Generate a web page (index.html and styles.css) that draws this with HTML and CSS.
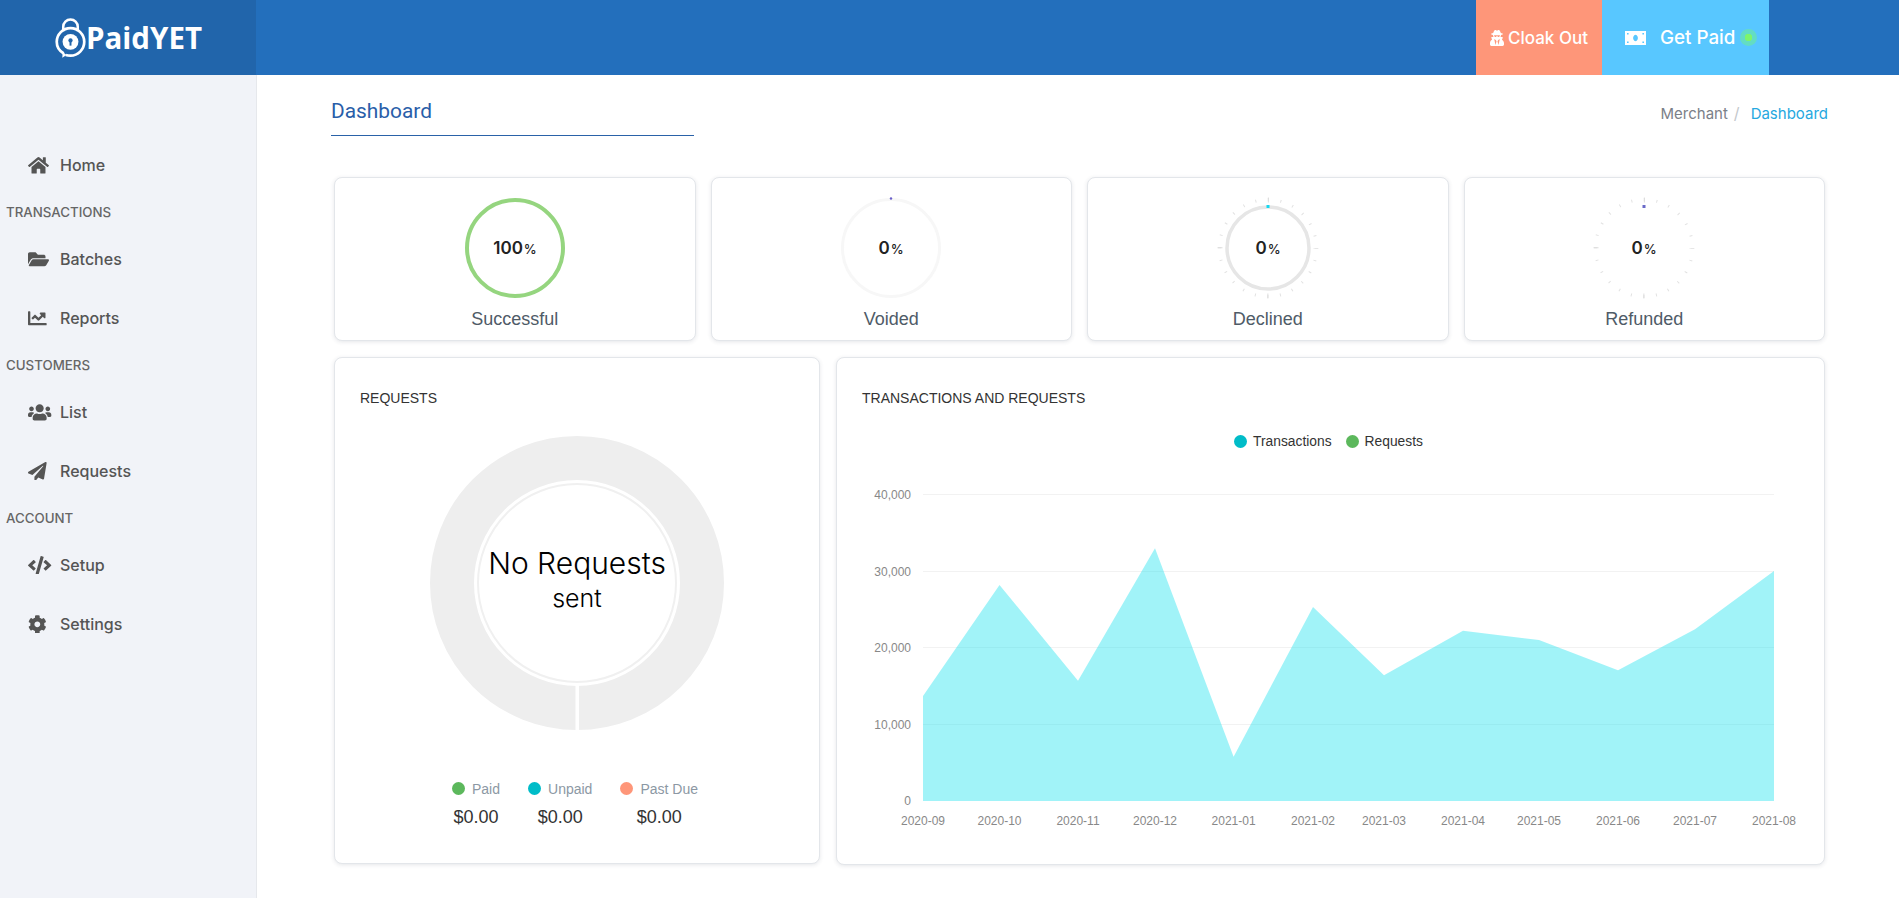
FILE: index.html
```html
<!DOCTYPE html>
<html lang="en">
<head>
<meta charset="utf-8">
<title>PaidYET Dashboard</title>
<link rel="stylesheet" href="styles.css">
</head>
<body>
<svg class="sprites" width="0" height="0" aria-hidden="true">
  <symbol id="i-home" viewBox="0 0 576 512" preserveAspectRatio="xMinYMid meet"><path d="M280.37 148.26L96 300.11V464a16 16 0 0 0 16 16l112.06-.29a16 16 0 0 0 15.92-16V368a16 16 0 0 1 16-16h64a16 16 0 0 1 16 16v95.64a16 16 0 0 0 16 16.05L464 480a16 16 0 0 0 16-16V300L295.67 148.26a12.19 12.19 0 0 0-15.3 0zM571.6 251.47L488 182.56V44.05a12 12 0 0 0-12-12h-56a12 12 0 0 0-12 12v72.61L318.47 43a48 48 0 0 0-61 0L4.34 251.47a12 12 0 0 0-1.6 16.9l25.5 31A12 12 0 0 0 45.15 301l235.22-193.74a12.19 12.19 0 0 1 15.3 0L530.9 301a12 12 0 0 0 16.9-1.6l25.5-31a12 12 0 0 0-1.7-16.93z"/></symbol>
  <symbol id="i-folder" viewBox="0 0 576 512" preserveAspectRatio="xMinYMid meet"><path d="M572.694 292.093L500.27 416.248A63.997 63.997 0 0 1 444.989 448H45.025c-18.523 0-30.064-20.093-20.731-36.093l72.424-124.155A64 64 0 0 1 152 256h399.964c18.523 0 30.064 20.093 20.73 36.093zM152 224h328v-48c0-26.51-21.49-48-48-48H272l-64-64H48C21.49 64 0 85.49 0 112v278.046l69.077-118.418C86.214 242.25 117.989 224 152 224z"/></symbol>
  <symbol id="i-chart" viewBox="0 0 512 512" preserveAspectRatio="xMinYMid meet"><path d="M496 384H64V80c0-8.84-7.16-16-16-16H16C7.16 64 0 71.16 0 80v336c0 17.67 14.33 32 32 32h464c8.84 0 16-7.16 16-16v-32c0-8.84-7.16-16-16-16zM464 96H345.94c-21.38 0-32.09 25.85-16.97 40.97l32.4 32.4L288 242.75l-73.37-73.37c-12.5-12.5-32.76-12.5-45.25 0l-68.69 68.69c-6.25 6.25-6.25 16.38 0 22.63l22.62 22.62c6.25 6.25 16.38 6.25 22.63 0L192 237.25l73.37 73.37c12.5 12.5 32.76 12.5 45.25 0l96-96 32.4 32.4c15.12 15.12 40.97 4.41 40.97-16.97V112c.01-8.84-7.15-16-15.99-16z"/></symbol>
  <symbol id="i-users" viewBox="0 0 640 512" preserveAspectRatio="xMinYMid meet"><path d="M96 224c35.3 0 64-28.7 64-64s-28.7-64-64-64-64 28.7-64 64 28.7 64 64 64zm448 0c35.3 0 64-28.7 64-64s-28.7-64-64-64-64 28.7-64 64 28.7 64 64 64zm32 32h-64c-17.6 0-33.5 7.1-45.1 18.6 40.3 22.1 68.9 62 75.1 109.4h66c17.7 0 32-14.3 32-32v-32c0-35.3-28.7-64-64-64zm-256 0c61.9 0 112-50.1 112-112S381.9 32 320 32 208 82.1 208 144s50.1 112 112 112zm76.8 32h-8.3c-20.8 10-43.9 16-68.5 16s-47.6-6-68.5-16h-8.3C179.6 288 128 339.6 128 403.2V432c0 26.5 21.5 48 48 48h288c26.5 0 48-21.5 48-48v-28.8c0-63.6-51.6-115.2-115.2-115.2zm-223.7-13.4C161.5 263.1 145.6 256 128 256H64c-35.3 0-64 28.7-64 64v32c0 17.7 14.3 32 32 32h65.9c6.3-47.4 34.9-87.3 75.2-109.4z"/></symbol>
  <symbol id="i-plane" viewBox="0 0 512 512" preserveAspectRatio="xMinYMid meet"><path d="M476 3.2L12.5 270.6c-18.1 10.4-15.8 35.6 2.2 43.2L121 358.4l287.3-253.2c5.5-4.9 13.3 2.6 8.6 8.3L176 407v80.5c0 23.6 28.5 32.9 42.5 15.8L282 426l124.6 52.2c14.2 6 30.4-2.9 33-18.2l72-432C515 7.8 493.3-6.8 476 3.2z"/></symbol>
  <symbol id="i-code" viewBox="0 0 640 512" preserveAspectRatio="xMinYMid meet"><path d="M278.9 511.5l-61-17.7c-6.4-1.8-10-8.5-8.2-14.9L346.2 8.7c1.8-6.4 8.5-10 14.9-8.2l61 17.7c6.4 1.8 10 8.5 8.2 14.9L293.8 503.3c-1.9 6.4-8.5 10.1-14.9 8.2zm-114-112.2l43.5-46.4c4.6-4.9 4.3-12.7-.8-17.2L117 256l90.6-79.7c5.1-4.5 5.5-12.3.8-17.2l-43.5-46.4c-4.5-4.8-12.1-5.1-17-.5L3.8 247.2c-5.1 4.7-5.1 12.8 0 17.5l144.1 135.1c4.9 4.6 12.5 4.4 17-.5zm327.2.6l144.1-135.1c5.1-4.7 5.1-12.8 0-17.5L492.1 112.1c-4.8-4.5-12.4-4.3-17 .5L431.6 159c-4.6 4.9-4.3 12.7.8 17.2L523 256l-90.6 79.7c-5.1 4.5-5.5 12.3-.8 17.2l43.5 46.4c4.5 4.9 12.1 5.1 17 .6z"/></symbol>
  <symbol id="i-cog" viewBox="0 0 512 512" preserveAspectRatio="xMinYMid meet"><path d="M487.4 315.7l-42.6-24.6c4.3-23.2 4.3-47 0-70.2l42.6-24.6c4.9-2.8 7.1-8.6 5.5-14-11.1-35.6-30-67.8-54.7-94.6-3.8-4.1-10-5.1-14.8-2.3L380.8 110c-17.9-15.4-38.5-27.3-60.8-35.1V25.8c0-5.6-3.9-10.5-9.4-11.7-36.7-8.2-74.3-7.8-109.2 0-5.5 1.2-9.4 6.1-9.4 11.7V75c-22.2 7.9-42.8 19.8-60.8 35.1L88.7 85.5c-4.9-2.8-11-1.9-14.8 2.3-24.7 26.7-43.6 58.9-54.7 94.6-1.7 5.4.6 11.2 5.5 14L67.3 221c-4.3 23.2-4.3 47 0 70.2l-42.6 24.6c-4.9 2.8-7.1 8.6-5.5 14 11.1 35.6 30 67.8 54.7 94.6 3.8 4.1 10 5.1 14.8 2.3l42.6-24.6c17.9 15.4 38.5 27.3 60.8 35.1v49.2c0 5.6 3.9 10.5 9.4 11.7 36.7 8.2 74.3 7.8 109.2 0 5.5-1.2 9.4-6.1 9.4-11.7v-49.2c22.2-7.9 42.8-19.8 60.8-35.1l42.6 24.6c4.9 2.8 11 1.9 14.8-2.3 24.7-26.7 43.6-58.9 54.7-94.6 1.5-5.5-.7-11.3-5.6-14.1zM256 336c-44.1 0-80-35.9-80-80s35.9-80 80-80 80 35.9 80 80-35.9 80-80 80z"/></symbol>
  <symbol id="i-secret" viewBox="0 0 448 512"><path d="M383.9 308.3l23.9-62.6c4-10.5-3.7-21.7-15-21.7h-58.5c11-18.9 17.8-40.6 17.8-64v-.3c39.2-7.8 64-19.1 64-31.7 0-13.3-27.3-25.1-70.1-33-9.2-32.8-27-65.8-40.6-82.8-9.5-11.9-25.9-15.6-39.5-8.8l-27.6 13.8c-9 4.5-19.6 4.5-28.6 0L182.1 3.4c-13.6-6.8-30-3.1-39.5 8.8-13.5 17-31.4 50-40.6 82.8-42.7 7.9-70 19.7-70 33 0 12.6 24.8 23.9 64 31.7v.3c0 23.4 6.8 45.1 17.8 64H56.3c-11.5 0-19.2 11.7-14.7 22.3l25.8 60.2C27.3 329.8 0 372.7 0 422.4v44.8C0 491.9 20.1 512 44.8 512h358.4c24.7 0 44.8-20.1 44.8-44.8v-44.8c0-48.4-25.8-90.4-64.1-114.1zM176 480l-41.6-192 49.6 32 24 40-32 120zm96 0l-32-120 24-40 49.6-32L272 480zm41.7-298.5c-3.9 11.9-7 24.6-16.5 33.4-10.1 9.3-48 22.4-64-25-2.8-8.4-15.4-8.4-18.3 0-17 50.2-56 32.4-64 25-9.5-8.8-12.7-21.5-16.5-33.4-.8-2.5-6.3-5.7-6.3-5.8v-10.8c28.3 3.6 61 5.8 96 5.8s67.7-2.1 96-5.8v10.8c-.1.1-5.6 3.2-6.4 5.8z"/></symbol>
</svg>

<header class="topbar">
  <a class="brand" href="#">
    <svg class="brand-mark" viewBox="0 0 32 42" aria-hidden="true">
      <path class="mark-shackle" d="M8.5 14.5V10a7.5 7.5 0 0 1 15 0v4.5"/>
      <path class="mark-ring" d="M9 37.5C4.5 35 1.8 30 1.8 25.5a14.2 14.2 0 1 1 14.2 14.2c-1.5 0-3.5-.2-4.8-.7"/>
      <path class="mark-tail" d="M8 36l4 3-4.5 2.8z"/>
      <circle class="mark-disc" cx="16" cy="25.5" r="8.2"/>
      <circle class="mark-hole" cx="16" cy="24" r="2.2"/>
      <rect class="mark-hole" x="15" y="24" width="2" height="5.4"/>
    </svg>
    <span class="brand-name">PaidYET</span>
  </a>
  <div class="topbar-actions">
    <a class="action action-cloak" href="#">
      <svg class="action-icon-secret"><use href="#i-secret"/></svg>
      <span>Cloak Out</span>
    </a>
    <a class="action action-paid" href="#">
      <svg class="action-icon-bill" viewBox="0 0 21 14" aria-hidden="true">
        <path class="bill" fill-rule="evenodd" d="M0 0h21v14H0zM10.500 3.800a2.400 3.200 0 1 0 .01 0zM2 2v1.600h1.600V2zM17.400 2v1.600H19V2zM2 10.400V12h1.600v-1.600zM17.400 10.400V12H19v-1.600z"/>
      </svg>
      <span>Get Paid</span>
      <span class="pulse"></span>
    </a>
  </div>
</header>

<div class="layout">
  <nav class="sidebar">
    <a class="nav-item" href="#"><svg class="nav-icon"><use href="#i-home"/></svg><span>Home</span></a>
    <div class="nav-section">TRANSACTIONS</div>
    <a class="nav-item" href="#"><svg class="nav-icon"><use href="#i-folder"/></svg><span>Batches</span></a>
    <a class="nav-item" href="#"><svg class="nav-icon"><use href="#i-chart"/></svg><span>Reports</span></a>
    <div class="nav-section">CUSTOMERS</div>
    <a class="nav-item" href="#"><svg class="nav-icon"><use href="#i-users"/></svg><span>List</span></a>
    <a class="nav-item" href="#"><svg class="nav-icon"><use href="#i-plane"/></svg><span>Requests</span></a>
    <div class="nav-section">ACCOUNT</div>
    <a class="nav-item" href="#"><svg class="nav-icon"><use href="#i-code"/></svg><span>Setup</span></a>
    <a class="nav-item" href="#"><svg class="nav-icon"><use href="#i-cog"/></svg><span>Settings</span></a>
  </nav>

  <main class="content">
    <div class="page-head">
      <h1 class="page-title">Dashboard</h1>
      <div class="crumbs"><span>Merchant</span><span class="crumb-sep">/</span><span class="crumb-current">Dashboard</span></div>
    </div>

    <section class="stat-grid">
      <div class="card stat">
        <svg class="gauge" viewBox="-60 -60 120 120">
          <circle class="ring-green" r="48"/>
          <text class="gauge-text" y="6">100<tspan class="gauge-pct" dx="1">%</tspan></text>
        </svg>
        <div class="stat-label">Successful</div>
      </div>
      <div class="card stat">
        <svg class="gauge" viewBox="-60 -60 120 120">
          <circle class="ring-faint" r="48.500"/>
          <circle class="dot-purple" cy="-49.500" r="1.200"/>
          <text class="gauge-text" y="6">0<tspan class="gauge-pct" dx="1">%</tspan></text>
        </svg>
        <div class="stat-label">Voided</div>
      </div>
      <div class="card stat">
        <svg class="gauge" viewBox="-60 -60 120 120">
          <circle class="ticks-minor" r="48.500"/>
          <circle class="ticks-major" r="48"/>
          <circle class="ring-grey" r="41"/>
          <rect class="mark-cyan" x="-1.500" y="-43" width="3" height="3"/>
          <text class="gauge-text" y="6">0<tspan class="gauge-pct" dx="1">%</tspan></text>
        </svg>
        <div class="stat-label">Declined</div>
      </div>
      <div class="card stat">
        <svg class="gauge" viewBox="-60 -60 120 120">
          <circle class="ticks-minor" r="48.500"/>
          <circle class="ticks-major" r="48"/>
          <rect class="mark-purple" x="-1.500" y="-43" width="3" height="3"/>
          <text class="gauge-text" y="6">0<tspan class="gauge-pct" dx="1">%</tspan></text>
        </svg>
        <div class="stat-label">Refunded</div>
      </div>
    </section>

    <section class="chart-grid">
      <div class="card panel panel-requests">
        <div class="panel-title">REQUESTS</div>
        <svg class="donut" viewBox="-150 -150 300 300">
          <circle class="donut-band" r="125"/>
          <circle class="donut-line" r="99"/>
          <rect class="donut-cut" x="-1.500" y="100" width="3.500" height="50"/>
          <text class="donut-main" y="-9">No Requests</text>
          <text class="donut-sub" y="24">sent</text>
        </svg>
        <div class="totals">
          <div class="total">
            <div class="total-key"><span class="dot dot-green"></span>Paid</div>
            <div class="total-value">$0.00</div>
          </div>
          <div class="total">
            <div class="total-key"><span class="dot dot-teal"></span>Unpaid</div>
            <div class="total-value">$0.00</div>
          </div>
          <div class="total">
            <div class="total-key"><span class="dot dot-salmon"></span>Past Due</div>
            <div class="total-value">$0.00</div>
          </div>
        </div>
      </div>

      <div class="card panel panel-trend">
        <div class="panel-title">TRANSACTIONS AND REQUESTS</div>
        <div class="trend-legend">
          <span class="trend-key"><span class="dot dot-teal"></span>Transactions</span>
          <span class="trend-key"><span class="dot dot-green"></span>Requests</span>
        </div>
        <svg class="trend" viewBox="862 470 939 350">
          <g class="grid-lines">
            <line x1="923" x2="1774" y1="494.500" y2="494.500"/>
            <line x1="923" x2="1774" y1="571.500" y2="571.500"/>
            <line x1="923" x2="1774" y1="647.500" y2="647.500"/>
            <line x1="923" x2="1774" y1="724.500" y2="724.500"/>
          </g>
          <polygon class="area" points="923,696 999.500,585 1078,680.700 1155,548.300 1233.600,756.700 1313,607 1384,675.300 1463,630.700 1539,640 1618,670.300 1695,629.300 1774,571 1774,801 923,801"/>
          <g class="y-labels">
            <text x="911" y="499">40,000</text>
            <text x="911" y="576">30,000</text>
            <text x="911" y="652">20,000</text>
            <text x="911" y="729">10,000</text>
            <text x="911" y="805">0</text>
          </g>
          <g class="x-labels">
            <text x="923" y="825">2020-09</text>
            <text x="999.500" y="825">2020-10</text>
            <text x="1078" y="825">2020-11</text>
            <text x="1155" y="825">2020-12</text>
            <text x="1233.600" y="825">2021-01</text>
            <text x="1313" y="825">2021-02</text>
            <text x="1384" y="825">2021-03</text>
            <text x="1463" y="825">2021-04</text>
            <text x="1539" y="825">2021-05</text>
            <text x="1618" y="825">2021-06</text>
            <text x="1695" y="825">2021-07</text>
            <text x="1774" y="825">2021-08</text>
          </g>
        </svg>
      </div>
    </section>
  </main>
</div>
</body>
</html>
```
FILE: styles.css
```css
* { box-sizing: border-box; }
html, body { height: 100%; }
body {
  margin: 0;
  background: #fff;
  color: #333;
  font-family: "Liberation Sans", Arial, sans-serif;
  overflow: hidden;
}
a { color: inherit; text-decoration: none; }
.sprites { position: absolute; }

/* top bar */
.topbar {
  height: 75px;
  display: flex;
  justify-content: space-between;
  background: #236fbc;
}
.brand {
  width: 256px;
  padding-left: 55px;
  display: flex;
  align-items: center;
  gap: 0;
  background: #2165ab;
  color: #fff;
}
.brand-mark { width: 31px; height: 41px; flex: none; }
.mark-shackle { fill: none; stroke: #fff; stroke-width: 2.6; }
.mark-ring { fill: none; stroke: #fff; stroke-width: 2.8; }
.mark-tail, .mark-disc { fill: #fff; }
.mark-hole { fill: #2165ab; }
.brand-name {
  font-family: "Open Sans", sans-serif;
  font-weight: 700;
  font-size: 29.500px;
  line-height: 40px;
  letter-spacing: 0;
}
.topbar-actions { display: flex; margin-right: 130px; }
.action {
  display: flex;
  align-items: center;
  color: #fff;
  font-family: Inter, sans-serif;
  font-weight: 500;
}
.action-cloak { width: 126px; padding-left: 14px; gap: 4px; background: #fe9679; font-size: 17px; }
.action-paid { width: 167px; padding-left: 23px; background: #58c7ff; font-size: 18.800px; }
.action-icon-secret { width: 14px; height: 16px; fill: #fff; }
.action-icon-bill { width: 21px; height: 14px; margin-right: 14px; }
.bill { fill: #fff; }
.pulse {
  width: 17px;
  height: 17px;
  margin-left: 5px;
  border-radius: 50%;
  background: radial-gradient(circle, #7df56c 0 3.500px, #63dcc4 4px 8.500px);
}

/* layout */
.layout { display: flex; height: 823px; }
.sidebar {
  width: 257px;
  flex: none;
  padding-top: 60.500px;
  background: #f1f3f8;
  border-right: 1px solid #e6e8ec;
  color: #555;
  font-family: Inter, sans-serif;
}
.nav-item {
  height: 59px;
  padding-left: 28px;
  display: flex;
  align-items: center;
  font-size: 16px;
  font-weight: 500;
}
.nav-item span { margin-left: 8px; }
.nav-icon { width: 24px; height: 18.670px; fill: #555; }
.nav-section {
  height: 35px;
  padding-left: 6px;
  line-height: 35px;
  font-size: 13.300px;
  font-weight: 500;
  color: #666;
}

/* page */
.content { flex: 1; padding: 0 71px 0 74px; }
.page-head {
  position: relative;
  height: 102px;
  padding-top: 22px;
  display: flex;
  justify-content: space-between;
  align-items: flex-start;
}
.page-title {
  width: 363px;
  height: 39px;
  margin: 0;
  border-bottom: 1px solid #2a62a8;
  font-weight: 400;
  font-family: Roboto, sans-serif;
  font-size: 20.900px;
  line-height: 28px;
  color: #2a5ea9;
}
.crumbs {
  display: flex;
  align-items: center;
  height: 32px;
  font-family: Inter, sans-serif;
  font-size: 15px;
  color: #7b8088;
}
.crumb-sep { margin: 0 11px 0 6px; color: #c4c8cc; font-size: 16px; }
.crumb-current { color: #26a8e0; }

.stat-grid {
  padding: 0 3px;
  display: grid;
  grid-template-columns: repeat(4, 1fr);
  gap: 15px;
}
.card {
  background: #fff;
  border: 1px solid #e3e6ea;
  border-radius: 8px;
  box-shadow: 0 1px 4px rgba(40, 50, 70, .12);
}
.stat {
  height: 164px;
  padding-top: 10px;
  display: flex;
  flex-direction: column;
  align-items: center;
}
.gauge { width: 120px; height: 120px; flex: none; }
.ring-green { fill: none; stroke: #95d57f; stroke-width: 4; }
.ring-faint { fill: none; stroke: #f7f7f7; stroke-width: 3; }
.ring-grey { fill: none; stroke: #e6e6e6; stroke-width: 3.500; }
.dot-purple { fill: #6a5fc9; }
.mark-cyan { fill: #14d8f0; }
.mark-purple { fill: #6a6ac8; }
.ticks-minor {
  fill: none;
  stroke: #e2e2e2;
  stroke-width: 3;
  stroke-dasharray: 1 11.697;
  stroke-dashoffset: .5;
}
.ticks-major {
  fill: none;
  stroke: #dcdcdc;
  stroke-width: 5;
  stroke-dasharray: 1 74.398;
  stroke-dashoffset: .5;
}
.gauge-text {
  font-family: Inter, sans-serif;
  font-weight: 600;
  font-size: 17px;
  fill: #222;
  text-anchor: middle;
}
.gauge-pct { font-size: 13px; font-weight: 500; }
.stat-label {
  line-height: 23px;
  font-size: 18px;
  color: #4f5b67;
}

.chart-grid {
  margin-top: 16px;
  padding: 0 3px;
  display: grid;
  grid-template-columns: 486px 989px;
  gap: 16px;
  align-items: start;
}
.panel { padding: 30px 25px 0; }
.panel-requests { height: 507px; }
.panel-trend { height: 508px; }
.panel-title {
  height: 20px;
  line-height: 20px;
  font-size: 14px;
  color: #333;
}
.donut { display: block; width: 300px; height: 300px; margin: 25px 0 0 66.500px; }
.donut-band { fill: none; stroke: #eee; stroke-width: 44; }
.donut-line { fill: none; stroke: #f0f0f0; stroke-width: 2; }
.donut-cut { fill: #fff; }
.donut-main, .donut-sub {
  font-family: Inter, sans-serif;
  font-weight: 300;
  fill: #000;
  text-anchor: middle;
}
.donut-main { font-size: 30px; }
.donut-sub { font-size: 25px; }

.totals {
  margin: 45.500px 0 0 92px;
  display: flex;
  gap: 28px;
}
.total { display: flex; flex-direction: column; align-items: center; }
.total-key {
  display: flex;
  align-items: center;
  height: 20px;
  font-size: 14px;
  color: #8c98a4;
}
.dot { width: 13px; height: 13px; border-radius: 50%; margin-right: 7px; flex: none; }
.dot-green { background: #5cb85c; }
.dot-teal { background: #00bcc8; }
.dot-salmon { background: #fe9679; }
.total-value { margin-top: 4px; line-height: 28px; font-size: 18px; color: #333; }

.trend-legend {
  margin-top: 23px;
  height: 20px;
  padding-right: 4px;
  display: flex;
  justify-content: center;
  gap: 14px;
}
.trend-key { display: flex; align-items: center; font-size: 13.800px; color: #333; }
.trend-key .dot { margin-right: 6px; }
.trend { display: block; width: 939px; height: 350px; margin-top: 19px; overflow: visible; }
.grid-lines line { stroke: #f2f2f2; stroke-width: 1; }
.area { fill: #00dfeb; fill-opacity: .37; }
.y-labels text, .x-labels text { font-size: 12px; fill: #888; }
.y-labels text { text-anchor: end; }
.x-labels text { text-anchor: middle; }
```
